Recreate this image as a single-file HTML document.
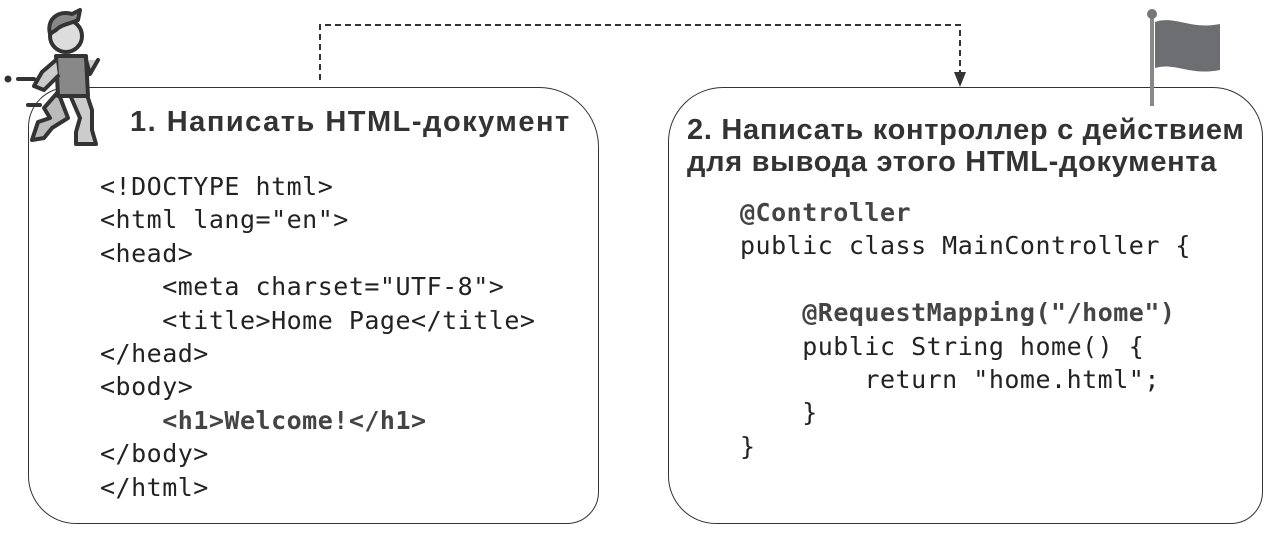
<!DOCTYPE html>
<html><head><meta charset="utf-8"><style>
body{margin:0;width:1277px;height:536px;background:#fff;position:relative;overflow:hidden;font-family:"Liberation Sans",sans-serif}
.box{position:absolute;border:1.5px solid #333;box-sizing:border-box}
.t{position:absolute;font-weight:bold;font-size:29px;color:#333;white-space:nowrap;line-height:32px}
.code{position:absolute;font-family:"DejaVu Sans Mono","Liberation Mono",monospace;font-size:25px;letter-spacing:0.5px;color:#222;line-height:33.4px;white-space:pre;margin:0}
b{color:#444}
</style></head><body>
<div class="box" style="left:28px;top:87px;width:571px;height:437px;border-radius:40px 60px 32px 48px"></div>
<div class="box" style="left:668px;top:87px;width:595px;height:437px;border-radius:55px 50px 32px 48px"></div>
<svg style="position:absolute;left:0;top:0" width="1277" height="536">
<path d="M320 80V25H960V76" fill="none" stroke="#333" stroke-width="2" stroke-dasharray="6 4"/>
<path d="M954 72L966 72L960 87Z" fill="#333"/>
<line x1="1152" y1="14" x2="1152" y2="106" stroke="#888" stroke-width="4"/>
<circle cx="1152" cy="14" r="5" fill="#777"/>
<path d="M1155 22C1175 15 1190 30 1220 24V70C1190 76 1175 62 1155 68Z" fill="#6d6e71"/>
<g stroke="#333" stroke-width="4" stroke-linejoin="round" stroke-linecap="round">
<line x1="18" y1="79" x2="34" y2="79"/><circle cx="8" cy="79" r="1.5"/>
<line x1="28" y1="105" x2="40" y2="105"/>
<path d="M58 92L44 108L50 118L38 122L32 140L44 138L52 128L68 118Z" fill="#bbb"/>
<path d="M70 95L80 118L76 132L76 144L96 144L92 130L92 110L86 92Z" fill="#ccc"/>
<path d="M56 56L86 56L88 96L58 96Z" fill="#888"/>
<path d="M56 60L42 72L34 86L44 90L58 76" fill="#ccc"/>
<path d="M86 60L90 74L98 60" fill="#ccc"/>
<circle cx="66" cy="36" r="16" fill="#ddd"/>
<path d="M50 34C46 18 60 10 72 14L80 10L78 20C70 24 62 24 56 30Z" fill="#888"/>
</g>
</svg>
<div class="t" style="left:130px;top:106px;letter-spacing:1.5px">1. Написать HTML-документ</div>
<div class="t" style="left:687px;top:114px;letter-spacing:0.7px">2. Написать контроллер с действием<br>для вывода этого HTML-документа</div>
<pre class="code" style="left:100px;top:170px">&lt;!DOCTYPE html&gt;
&lt;html lang="en"&gt;
&lt;head&gt;
    &lt;meta charset="UTF-8"&gt;
    &lt;title&gt;Home Page&lt;/title&gt;
&lt;/head&gt;
&lt;body&gt;
    <b>&lt;h1&gt;Welcome!&lt;/h1&gt;</b>
&lt;/body&gt;
&lt;/html&gt;</pre>
<pre class="code" style="left:740px;top:196px"><b>@Controller</b>
public class MainController {

    <b>@RequestMapping("/home")</b>
    public String home() {
        return "home.html";
    }
}</pre>
</body></html>
